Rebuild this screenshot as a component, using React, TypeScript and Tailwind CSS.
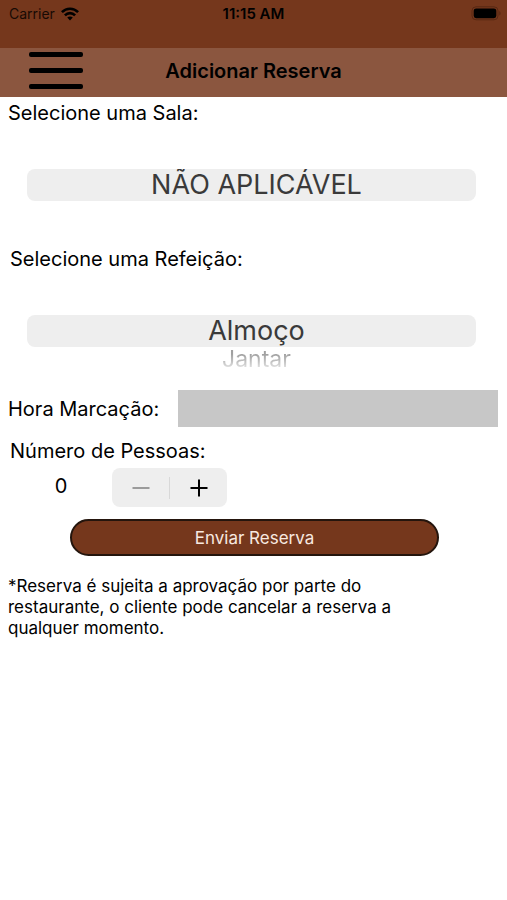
import { useState } from "react";

type WheelProps = {
  id: string;
  options: string[];
  value: number;
  onChange: (index: number) => void;
};

function Wheel({ id, options, value, onChange }: WheelProps) {
  const next = options[value + 1];
  return (
    <div className="flex flex-col pr-[31px] pl-[27px]">
      <select
        id={id}
        value={value}
        onChange={(e) => onChange(Number(e.target.value))}
        className="h-8 w-full shrink-0 appearance-none rounded-lg bg-[#eeeeee] pl-2.5 text-center text-[27px] leading-8 text-[#3a3a3a] [text-align-last:center]"
      >
        {options.map((option, i) => (
          <option key={option} value={i}>
            {option}
          </option>
        ))}
      </select>
      {next && (
        <div className="flex justify-center pl-2.5">
          <button
            type="button"
            onClick={() => onChange(value + 1)}
            className="bg-linear-to-b from-[#a0a0a0] from-30% to-[#e4e4e4] to-90% bg-clip-text text-[23px] leading-6 text-transparent"
          >
            {next}
          </button>
        </div>
      )}
    </div>
  );
}

function StatusBar() {
  return (
    <div className="grid h-12 grid-cols-3 items-start bg-[#75371c] px-2 pt-1 text-sm leading-5 text-black">
      <div className="flex items-center gap-1.5 pl-px">
        <span className="text-[#180a04]">Carrier</span>
        <svg width="18" height="14" viewBox="0 0 18 14" fill="none" stroke="black" strokeWidth="2.6" aria-label="Wi-Fi">
          <path d="M0.9 5.2C5.4 0.6 12.6 0.6 17.1 5.2" />
          <path d="M3.9 8.3C6.8 5.4 11.2 5.4 14.1 8.3" />
          <path d="M9 13.4L6.2 10.5C7.8 9 10.2 9 11.8 10.5Z" fill="black" stroke="none" />
        </svg>
      </div>
      <span className="text-center text-[15px] leading-5 font-semibold">11:15 AM</span>
      <svg className="-mr-0.5 justify-self-end" width="30" height="19" viewBox="0 0 30 19" aria-label="Bateria">
        <rect x="1" y="2.8" width="26" height="13" rx="4" fill="none" stroke="#582813" />
        <rect x="2.7" y="4.4" width="22.6" height="9.8" rx="2.4" fill="black" />
        <path d="M28.3 7C30 7.8 30 10.8 28.3 11.6Z" fill="#582813" />
      </svg>
    </div>
  );
}

export default function App() {
  const [room, setRoom] = useState(0);
  const [meal, setMeal] = useState(0);
  const [time, setTime] = useState("");
  const [people, setPeople] = useState(0);

  return (
    <div className="min-h-screen bg-white font-['Inter','Liberation_Sans',sans-serif] text-xl leading-8 text-black">
      <StatusBar />
      <header className="grid h-[49px] grid-cols-[84px_1fr_84px] items-start bg-[#8b563f]">
        <button type="button" aria-label="Menu" className="flex flex-col gap-[11px] pt-1 pl-[29px]">
          <span className="h-[5px] w-[54px] rounded-xs bg-black" />
          <span className="h-[5px] w-[54px] rounded-xs bg-black" />
          <span className="h-[5px] w-[54px] rounded-xs bg-black" />
        </button>
        <h1 className="text-center text-xl leading-[46px] font-semibold">Adicionar Reserva</h1>
      </header>

      <form onSubmit={(e) => e.preventDefault()}>
        <label htmlFor="sala" className="mb-10 block pl-2">
          Selecione uma Sala:
        </label>
        <div className="min-h-[74px]">
          <Wheel id="sala" options={["NÃO APLICÁVEL"]} value={room} onChange={setRoom} />
        </div>

        <label htmlFor="refeicao" className="mb-10 block pl-2.5">
          Selecione uma Refeição:
        </label>
        <div className="min-h-[75px]">
          <Wheel id="refeicao" options={["Almoço", "Jantar"]} value={meal} onChange={setMeal} />
        </div>

        <div className="flex items-center gap-[19px] pr-[9px] pl-2">
          <label htmlFor="hora" className="shrink-0">
            Hora Marcação:
          </label>
          <input
            id="hora"
            type="text"
            value={time}
            onChange={(e) => setTime(e.target.value)}
            className="h-[37px] min-w-0 flex-1 bg-[#c7c7c7] px-2"
          />
        </div>

        <p id="pessoas" className="mt-2 mb-px pl-2.5">
          Número de Pessoas:
        </p>
        <div role="group" aria-labelledby="pessoas" className="flex">
          <output className="w-28 pl-2.5 text-center leading-9">
            {people}
          </output>
          <div className="flex h-[39px] w-[115px] items-center rounded-lg bg-[#eeeeee]">
            <button
              type="button"
              aria-label="Diminuir"
              disabled={people === 0}
              onClick={() => setPeople(people - 1)}
              className="flex flex-1 justify-center text-black disabled:text-[#9b9b9b]"
            >
              <svg width="18" height="18" viewBox="0 0 18 18" stroke="currentColor" strokeWidth="2">
                <path d="M0.5 9H17.5" />
              </svg>
            </button>
            <span className="h-[22px] w-px bg-[#d8d8d8]" />
            <button
              type="button"
              aria-label="Aumentar"
              onClick={() => setPeople(people + 1)}
              className="flex flex-1 justify-center"
            >
              <svg width="18" height="18" viewBox="0 0 18 18" stroke="currentColor" strokeWidth="2">
                <path d="M0.5 9H17.5M9 0.5V17.5" />
              </svg>
            </button>
          </div>
        </div>

        <div className="mt-3 pr-[68px] pl-[70px]">
          <button
            type="submit"
            className="block h-[37px] w-full rounded-full border-2 border-[#24150d] bg-[#75371c] text-[17px] leading-8 text-[#f8e9e0]"
          >
            Enviar Reserva
          </button>
        </div>
      </form>

      <p className="mt-5 max-w-[408px] px-2 text-[17px] leading-[21px]">
        *Reserva é sujeita a aprovação por parte do restaurante, o cliente pode cancelar a reserva a qualquer momento.
      </p>
    </div>
  );
}
